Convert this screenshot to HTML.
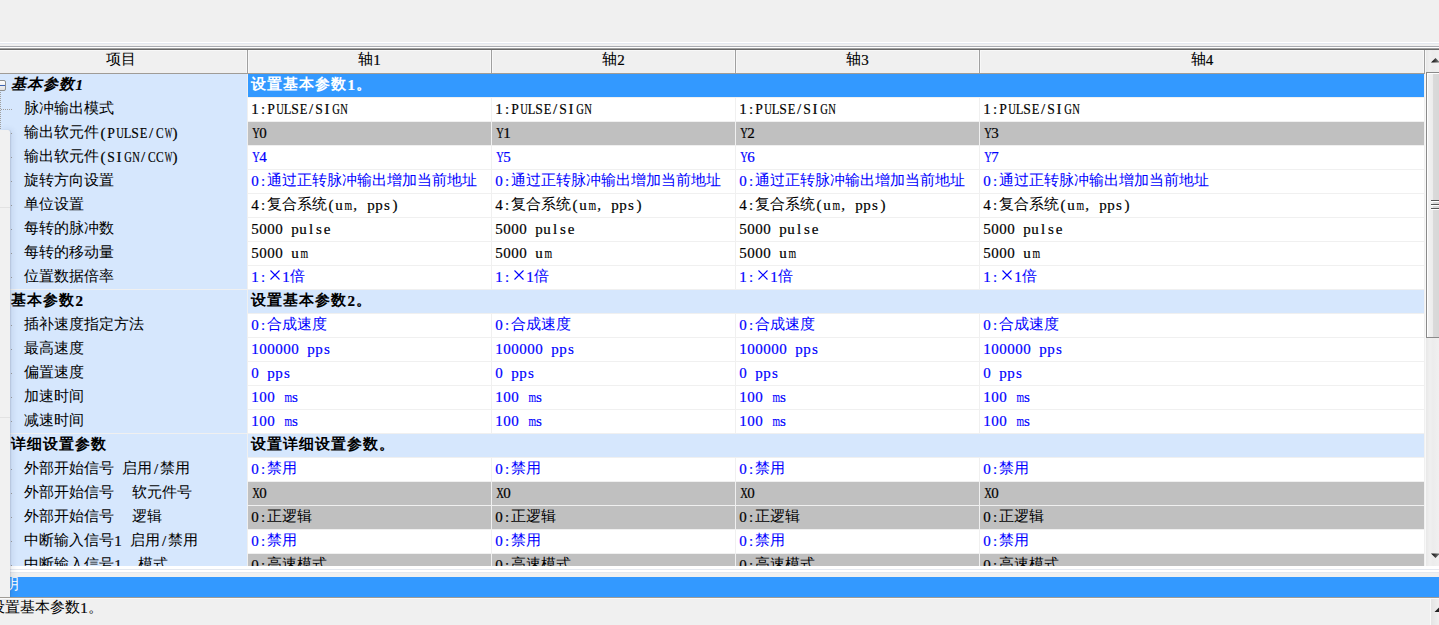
<!DOCTYPE html>
<html><head><meta charset="utf-8">
<style>
html,body{margin:0;padding:0;}
body{width:1439px;height:625px;overflow:hidden;background:#f0f0f0;position:relative;font-family:"Liberation Sans",sans-serif;font-size:15px;color:#000;}
div{position:absolute;box-sizing:border-box;}
.c{position:relative;top:-2px;}
svg.x{vertical-align:baseline;}
.a{font-family:"Liberation Serif",serif;font-size:15px;position:relative;top:-1px;-webkit-text-stroke:0.2px currentColor;}
b.s{font-weight:inherit;display:inline-block;width:8px;text-align:center;}
.gsel .c,.grow .c,.glab .c{letter-spacing:1px;}
.gsel b.s,.grow b.s,.glab b.s{width:8.6px;}
.ln{left:0;width:1439px;height:1px;}
#hdr{left:0;top:50px;width:1424px;height:24px;background:#f0f0f0;}
.hs{top:50px;width:1px;height:23px;background:#a0a0a0;}
.hw{top:51px;width:1px;height:22px;background:#f8f8f8;}
.hb{left:0;top:73px;width:1425px;height:1px;background:#a09c96;}
.ht{top:49px;height:23px;line-height:23px;text-align:center;white-space:nowrap;}
#tbl{left:0;top:74px;width:1424px;height:492px;overflow:hidden;background:#fff;}
#leftcol{left:0;top:0;width:247px;height:492px;background:#d6e7fd;}
#colb{left:247px;top:0;width:1px;height:492px;background:#f0f0f0;}
.csep{top:0;width:1px;height:492px;background:#f0f0f0;}
.rs{left:248px;width:1176px;height:1px;background:#f0f0f0;}
.hl{left:0;width:1424px;height:1px;background:#f0f0f0;}
.gsel{left:248px;width:1176px;height:23px;background:#3399ff;color:#fff;font-weight:bold;}
.grow{left:248px;width:1176px;height:23px;background:#d6e7fd;color:#000;font-weight:bold;}
.glab{left:11px;height:23px;font-weight:bold;white-space:nowrap;}
.glab.it{font-style:italic;}
.ilab{left:24px;height:23px;white-space:nowrap;}
.cell{height:23px;overflow:hidden;white-space:nowrap;}
.cell.w{background:#fff;}
.cell.g{background:#c0c0c0;}
.cell.k{color:#000;}
.cell.b{color:#0000ff;}
.t{left:3px;top:0;white-space:nowrap;}
.gsel .t,.grow .t{left:3px;}
.glab,.ilab,.t{line-height:23px;}
.dv{left:0;width:1px;background:repeating-linear-gradient(to bottom,#a0a0a0 0,#a0a0a0 1px,transparent 1px,transparent 2px);}
.dh{height:1px;background:repeating-linear-gradient(to right,#a0a0a0 0,#a0a0a0 1px,transparent 1px,transparent 2px);}
#ebox{left:-4px;top:80px;width:10px;height:11px;border:1px solid #8e8f8f;border-radius:2px;background:linear-gradient(#fff,#e0e0e0);}
#eminus{left:0;top:85px;width:5px;height:1px;background:#3c64b4;}
#vsb{left:1425px;top:50px;width:14px;height:516px;background:linear-gradient(to right,#f8f8f8 0,#f8f8f8 1px,#e8e8e8 1px,#f0f0f0 5px,#ececec 8px,#f0f0f0 14px);}
#thumb{left:1426px;top:72px;width:14px;height:266px;background:linear-gradient(to right,#f4f4f4 0,#ececec 6px,#dadada 6px,#d6d6d6 14px);border-left:1px solid #8a8a8a;border-top:1px solid #8a8a8a;border-bottom:1px solid #8a8a8a;box-shadow:inset 1px 1px 0 #fff;}
.grip{left:1431px;width:9px;height:2px;background:linear-gradient(#555 0,#555 1px,#fff 1px);}
#panel{left:0;top:130px;width:10px;height:468px;background:#f1f1f1;border-top-right-radius:2px;box-shadow:1px 0 1px rgba(0,0,0,0.08),2px 0 6px rgba(40,60,100,0.12);}
#band{left:10px;top:577px;width:1429px;height:20px;background:#3399ff;color:#fff;overflow:hidden;}
#status{left:-10px;top:595px;height:27px;line-height:27px;white-space:nowrap;}
</style></head><body>
<div class="ln" style="top:42px;background:#fff"></div>
<div class="ln" style="top:43px;background:#e4e8ef"></div>
<div class="ln" style="top:46px;background:#a8aab0"></div>
<div class="ln" style="top:47px;background:#fff"></div>
<div class="ln" style="top:48px;background:#a0a0a0"></div>
<div class="ln" style="top:49px;background:#696969"></div>
<div id="hdr"></div>
<div class="ln" style="top:50px;width:1424px;background:#f8f8f8"></div>
<div class="hw" style="left:246px"></div><div class="hs" style="left:247px"></div><div class="hw" style="left:248px"></div>
<div class="hw" style="left:490px"></div><div class="hs" style="left:491px"></div><div class="hw" style="left:492px"></div>
<div class="hw" style="left:734px"></div><div class="hs" style="left:735px"></div><div class="hw" style="left:736px"></div>
<div class="hw" style="left:978px"></div><div class="hs" style="left:979px"></div><div class="hw" style="left:980px"></div>
<div class="hw" style="left:1423px"></div><div class="hs" style="left:1424px"></div>
<div class="hb"></div>
<div class="ht" style="left:-6px;width:253px"><span class="c">项目</span></div>
<div class="ht" style="left:248px;width:243px"><span class="c">轴</span><span class="a"><b class="s">1</b></span></div>
<div class="ht" style="left:492px;width:243px"><span class="c">轴</span><span class="a"><b class="s">2</b></span></div>
<div class="ht" style="left:736px;width:243px"><span class="c">轴</span><span class="a"><b class="s">3</b></span></div>
<div class="ht" style="left:980px;width:444px"><span class="c">轴</span><span class="a"><b class="s">4</b></span></div>
<div id="tbl">
<div id="leftcol"></div>
<div id="colb"></div>
<div class="csep" style="left:491px"></div>
<div class="csep" style="left:735px"></div>
<div class="csep" style="left:979px"></div>
<div style="left:0;top:-74px;width:1424px;height:566px">
<div class="gsel" style="top:74px"><div class="t"><span class="c">设置基本参数</span><span class="a"><b class="s">1</b></span><span class="c">。</span></div></div>
<div class="glab it" style="top:74px"><span class="c">基本参数</span><span class="a"><b class="s">1</b></span></div>
<div class="rs" style="top:97px"></div>
<div class="ilab" style="top:98px"><span class="c">脉冲输出模式</span></div>
<div class="cell w k" style="top:98px;left:248px;width:243px"><div class="t"><span class="a"><b class="s">1</b><b class="s">:</b><b class="s" style="transform:scaleX(0.911)">P</b><b class="s" style="transform:scaleX(0.701)">U</b><b class="s" style="transform:scaleX(0.829)">L</b><b class="s" style="transform:scaleX(0.911)">S</b><b class="s" style="transform:scaleX(0.829)">E</b><b class="s">/</b><b class="s" style="transform:scaleX(0.911)">S</b><b class="s">I</b><b class="s" style="transform:scaleX(0.701)">G</b><b class="s" style="transform:scaleX(0.701)">N</b></span></div></div>
<div class="cell w k" style="top:98px;left:492px;width:243px"><div class="t"><span class="a"><b class="s">1</b><b class="s">:</b><b class="s" style="transform:scaleX(0.911)">P</b><b class="s" style="transform:scaleX(0.701)">U</b><b class="s" style="transform:scaleX(0.829)">L</b><b class="s" style="transform:scaleX(0.911)">S</b><b class="s" style="transform:scaleX(0.829)">E</b><b class="s">/</b><b class="s" style="transform:scaleX(0.911)">S</b><b class="s">I</b><b class="s" style="transform:scaleX(0.701)">G</b><b class="s" style="transform:scaleX(0.701)">N</b></span></div></div>
<div class="cell w k" style="top:98px;left:736px;width:243px"><div class="t"><span class="a"><b class="s">1</b><b class="s">:</b><b class="s" style="transform:scaleX(0.911)">P</b><b class="s" style="transform:scaleX(0.701)">U</b><b class="s" style="transform:scaleX(0.829)">L</b><b class="s" style="transform:scaleX(0.911)">S</b><b class="s" style="transform:scaleX(0.829)">E</b><b class="s">/</b><b class="s" style="transform:scaleX(0.911)">S</b><b class="s">I</b><b class="s" style="transform:scaleX(0.701)">G</b><b class="s" style="transform:scaleX(0.701)">N</b></span></div></div>
<div class="cell w k" style="top:98px;left:980px;width:444px"><div class="t"><span class="a"><b class="s">1</b><b class="s">:</b><b class="s" style="transform:scaleX(0.911)">P</b><b class="s" style="transform:scaleX(0.701)">U</b><b class="s" style="transform:scaleX(0.829)">L</b><b class="s" style="transform:scaleX(0.911)">S</b><b class="s" style="transform:scaleX(0.829)">E</b><b class="s">/</b><b class="s" style="transform:scaleX(0.911)">S</b><b class="s">I</b><b class="s" style="transform:scaleX(0.701)">G</b><b class="s" style="transform:scaleX(0.701)">N</b></span></div></div>
<div class="rs" style="top:121px"></div>
<div class="ilab" style="top:122px"><span class="c">输出软元件</span><span class="a"><b class="s">(</b><b class="s" style="transform:scaleX(0.911)">P</b><b class="s" style="transform:scaleX(0.701)">U</b><b class="s" style="transform:scaleX(0.829)">L</b><b class="s" style="transform:scaleX(0.911)">S</b><b class="s" style="transform:scaleX(0.829)">E</b><b class="s">/</b><b class="s" style="transform:scaleX(0.759)">C</b><b class="s" style="transform:scaleX(0.536)">W</b><b class="s">)</b></span></div>
<div class="cell g k" style="top:122px;left:248px;width:243px"><div class="t"><span class="a"><b class="s" style="transform:scaleX(0.701)">Y</b><b class="s">0</b></span></div></div>
<div class="cell g k" style="top:122px;left:492px;width:243px"><div class="t"><span class="a"><b class="s" style="transform:scaleX(0.701)">Y</b><b class="s">1</b></span></div></div>
<div class="cell g k" style="top:122px;left:736px;width:243px"><div class="t"><span class="a"><b class="s" style="transform:scaleX(0.701)">Y</b><b class="s">2</b></span></div></div>
<div class="cell g k" style="top:122px;left:980px;width:444px"><div class="t"><span class="a"><b class="s" style="transform:scaleX(0.701)">Y</b><b class="s">3</b></span></div></div>
<div class="rs" style="top:145px"></div>
<div class="ilab" style="top:146px"><span class="c">输出软元件</span><span class="a"><b class="s">(</b><b class="s" style="transform:scaleX(0.911)">S</b><b class="s">I</b><b class="s" style="transform:scaleX(0.701)">G</b><b class="s" style="transform:scaleX(0.701)">N</b><b class="s">/</b><b class="s" style="transform:scaleX(0.759)">C</b><b class="s" style="transform:scaleX(0.759)">C</b><b class="s" style="transform:scaleX(0.536)">W</b><b class="s">)</b></span></div>
<div class="cell w b" style="top:146px;left:248px;width:243px"><div class="t"><span class="a"><b class="s" style="transform:scaleX(0.701)">Y</b><b class="s">4</b></span></div></div>
<div class="cell w b" style="top:146px;left:492px;width:243px"><div class="t"><span class="a"><b class="s" style="transform:scaleX(0.701)">Y</b><b class="s">5</b></span></div></div>
<div class="cell w b" style="top:146px;left:736px;width:243px"><div class="t"><span class="a"><b class="s" style="transform:scaleX(0.701)">Y</b><b class="s">6</b></span></div></div>
<div class="cell w b" style="top:146px;left:980px;width:444px"><div class="t"><span class="a"><b class="s" style="transform:scaleX(0.701)">Y</b><b class="s">7</b></span></div></div>
<div class="rs" style="top:169px"></div>
<div class="ilab" style="top:170px"><span class="c">旋转方向设置</span></div>
<div class="cell w b" style="top:170px;left:248px;width:243px"><div class="t"><span class="a"><b class="s">0</b><b class="s">:</b></span><span class="c">通过正转脉冲输出增加当前地址</span></div></div>
<div class="cell w b" style="top:170px;left:492px;width:243px"><div class="t"><span class="a"><b class="s">0</b><b class="s">:</b></span><span class="c">通过正转脉冲输出增加当前地址</span></div></div>
<div class="cell w b" style="top:170px;left:736px;width:243px"><div class="t"><span class="a"><b class="s">0</b><b class="s">:</b></span><span class="c">通过正转脉冲输出增加当前地址</span></div></div>
<div class="cell w b" style="top:170px;left:980px;width:444px"><div class="t"><span class="a"><b class="s">0</b><b class="s">:</b></span><span class="c">通过正转脉冲输出增加当前地址</span></div></div>
<div class="rs" style="top:193px"></div>
<div class="ilab" style="top:194px"><span class="c">单位设置</span></div>
<div class="cell w k" style="top:194px;left:248px;width:243px"><div class="t"><span class="a"><b class="s">4</b><b class="s">:</b></span><span class="c">复合系统</span><span class="a"><b class="s">(</b><b class="s">u</b><b class="s" style="transform:scaleX(0.651)">m</b><b class="s">,</b><b class="s"></b><b class="s">p</b><b class="s">p</b><b class="s">s</b><b class="s">)</b></span></div></div>
<div class="cell w k" style="top:194px;left:492px;width:243px"><div class="t"><span class="a"><b class="s">4</b><b class="s">:</b></span><span class="c">复合系统</span><span class="a"><b class="s">(</b><b class="s">u</b><b class="s" style="transform:scaleX(0.651)">m</b><b class="s">,</b><b class="s"></b><b class="s">p</b><b class="s">p</b><b class="s">s</b><b class="s">)</b></span></div></div>
<div class="cell w k" style="top:194px;left:736px;width:243px"><div class="t"><span class="a"><b class="s">4</b><b class="s">:</b></span><span class="c">复合系统</span><span class="a"><b class="s">(</b><b class="s">u</b><b class="s" style="transform:scaleX(0.651)">m</b><b class="s">,</b><b class="s"></b><b class="s">p</b><b class="s">p</b><b class="s">s</b><b class="s">)</b></span></div></div>
<div class="cell w k" style="top:194px;left:980px;width:444px"><div class="t"><span class="a"><b class="s">4</b><b class="s">:</b></span><span class="c">复合系统</span><span class="a"><b class="s">(</b><b class="s">u</b><b class="s" style="transform:scaleX(0.651)">m</b><b class="s">,</b><b class="s"></b><b class="s">p</b><b class="s">p</b><b class="s">s</b><b class="s">)</b></span></div></div>
<div class="rs" style="top:217px"></div>
<div class="ilab" style="top:218px"><span class="c">每转的脉冲数</span></div>
<div class="cell w k" style="top:218px;left:248px;width:243px"><div class="t"><span class="a"><b class="s">5</b><b class="s">0</b><b class="s">0</b><b class="s">0</b><b class="s"></b><b class="s">p</b><b class="s">u</b><b class="s">l</b><b class="s">s</b><b class="s">e</b></span></div></div>
<div class="cell w k" style="top:218px;left:492px;width:243px"><div class="t"><span class="a"><b class="s">5</b><b class="s">0</b><b class="s">0</b><b class="s">0</b><b class="s"></b><b class="s">p</b><b class="s">u</b><b class="s">l</b><b class="s">s</b><b class="s">e</b></span></div></div>
<div class="cell w k" style="top:218px;left:736px;width:243px"><div class="t"><span class="a"><b class="s">5</b><b class="s">0</b><b class="s">0</b><b class="s">0</b><b class="s"></b><b class="s">p</b><b class="s">u</b><b class="s">l</b><b class="s">s</b><b class="s">e</b></span></div></div>
<div class="cell w k" style="top:218px;left:980px;width:444px"><div class="t"><span class="a"><b class="s">5</b><b class="s">0</b><b class="s">0</b><b class="s">0</b><b class="s"></b><b class="s">p</b><b class="s">u</b><b class="s">l</b><b class="s">s</b><b class="s">e</b></span></div></div>
<div class="rs" style="top:241px"></div>
<div class="ilab" style="top:242px"><span class="c">每转的移动量</span></div>
<div class="cell w k" style="top:242px;left:248px;width:243px"><div class="t"><span class="a"><b class="s">5</b><b class="s">0</b><b class="s">0</b><b class="s">0</b><b class="s"></b><b class="s">u</b><b class="s" style="transform:scaleX(0.651)">m</b></span></div></div>
<div class="cell w k" style="top:242px;left:492px;width:243px"><div class="t"><span class="a"><b class="s">5</b><b class="s">0</b><b class="s">0</b><b class="s">0</b><b class="s"></b><b class="s">u</b><b class="s" style="transform:scaleX(0.651)">m</b></span></div></div>
<div class="cell w k" style="top:242px;left:736px;width:243px"><div class="t"><span class="a"><b class="s">5</b><b class="s">0</b><b class="s">0</b><b class="s">0</b><b class="s"></b><b class="s">u</b><b class="s" style="transform:scaleX(0.651)">m</b></span></div></div>
<div class="cell w k" style="top:242px;left:980px;width:444px"><div class="t"><span class="a"><b class="s">5</b><b class="s">0</b><b class="s">0</b><b class="s">0</b><b class="s"></b><b class="s">u</b><b class="s" style="transform:scaleX(0.651)">m</b></span></div></div>
<div class="rs" style="top:265px"></div>
<div class="ilab" style="top:266px"><span class="c">位置数据倍率</span></div>
<div class="cell w b" style="top:266px;left:248px;width:243px"><div class="t"><span class="a"><b class="s">1</b><b class="s">:</b></span><svg class="x" width="15" height="13" viewBox="0 0 15 13"><path d="M3.5 0.5L12.5 9.5M12.5 0.5L3.5 9.5" stroke="currentColor" stroke-width="1.1" fill="none"/></svg><span class="a"><b class="s">1</b></span><span class="c">倍</span></div></div>
<div class="cell w b" style="top:266px;left:492px;width:243px"><div class="t"><span class="a"><b class="s">1</b><b class="s">:</b></span><svg class="x" width="15" height="13" viewBox="0 0 15 13"><path d="M3.5 0.5L12.5 9.5M12.5 0.5L3.5 9.5" stroke="currentColor" stroke-width="1.1" fill="none"/></svg><span class="a"><b class="s">1</b></span><span class="c">倍</span></div></div>
<div class="cell w b" style="top:266px;left:736px;width:243px"><div class="t"><span class="a"><b class="s">1</b><b class="s">:</b></span><svg class="x" width="15" height="13" viewBox="0 0 15 13"><path d="M3.5 0.5L12.5 9.5M12.5 0.5L3.5 9.5" stroke="currentColor" stroke-width="1.1" fill="none"/></svg><span class="a"><b class="s">1</b></span><span class="c">倍</span></div></div>
<div class="cell w b" style="top:266px;left:980px;width:444px"><div class="t"><span class="a"><b class="s">1</b><b class="s">:</b></span><svg class="x" width="15" height="13" viewBox="0 0 15 13"><path d="M3.5 0.5L12.5 9.5M12.5 0.5L3.5 9.5" stroke="currentColor" stroke-width="1.1" fill="none"/></svg><span class="a"><b class="s">1</b></span><span class="c">倍</span></div></div>
<div class="rs" style="top:289px"></div>
<div class="hl" style="top:289px"></div>
<div class="grow" style="top:290px"><div class="t"><span class="c">设置基本参数</span><span class="a"><b class="s">2</b></span><span class="c">。</span></div></div>
<div class="glab" style="top:290px"><span class="c">基本参数</span><span class="a"><b class="s">2</b></span></div>
<div class="rs" style="top:313px"></div>
<div class="ilab" style="top:314px"><span class="c">插补速度指定方法</span></div>
<div class="cell w b" style="top:314px;left:248px;width:243px"><div class="t"><span class="a"><b class="s">0</b><b class="s">:</b></span><span class="c">合成速度</span></div></div>
<div class="cell w b" style="top:314px;left:492px;width:243px"><div class="t"><span class="a"><b class="s">0</b><b class="s">:</b></span><span class="c">合成速度</span></div></div>
<div class="cell w b" style="top:314px;left:736px;width:243px"><div class="t"><span class="a"><b class="s">0</b><b class="s">:</b></span><span class="c">合成速度</span></div></div>
<div class="cell w b" style="top:314px;left:980px;width:444px"><div class="t"><span class="a"><b class="s">0</b><b class="s">:</b></span><span class="c">合成速度</span></div></div>
<div class="rs" style="top:337px"></div>
<div class="ilab" style="top:338px"><span class="c">最高速度</span></div>
<div class="cell w b" style="top:338px;left:248px;width:243px"><div class="t"><span class="a"><b class="s">1</b><b class="s">0</b><b class="s">0</b><b class="s">0</b><b class="s">0</b><b class="s">0</b><b class="s"></b><b class="s">p</b><b class="s">p</b><b class="s">s</b></span></div></div>
<div class="cell w b" style="top:338px;left:492px;width:243px"><div class="t"><span class="a"><b class="s">1</b><b class="s">0</b><b class="s">0</b><b class="s">0</b><b class="s">0</b><b class="s">0</b><b class="s"></b><b class="s">p</b><b class="s">p</b><b class="s">s</b></span></div></div>
<div class="cell w b" style="top:338px;left:736px;width:243px"><div class="t"><span class="a"><b class="s">1</b><b class="s">0</b><b class="s">0</b><b class="s">0</b><b class="s">0</b><b class="s">0</b><b class="s"></b><b class="s">p</b><b class="s">p</b><b class="s">s</b></span></div></div>
<div class="cell w b" style="top:338px;left:980px;width:444px"><div class="t"><span class="a"><b class="s">1</b><b class="s">0</b><b class="s">0</b><b class="s">0</b><b class="s">0</b><b class="s">0</b><b class="s"></b><b class="s">p</b><b class="s">p</b><b class="s">s</b></span></div></div>
<div class="rs" style="top:361px"></div>
<div class="ilab" style="top:362px"><span class="c">偏置速度</span></div>
<div class="cell w b" style="top:362px;left:248px;width:243px"><div class="t"><span class="a"><b class="s">0</b><b class="s"></b><b class="s">p</b><b class="s">p</b><b class="s">s</b></span></div></div>
<div class="cell w b" style="top:362px;left:492px;width:243px"><div class="t"><span class="a"><b class="s">0</b><b class="s"></b><b class="s">p</b><b class="s">p</b><b class="s">s</b></span></div></div>
<div class="cell w b" style="top:362px;left:736px;width:243px"><div class="t"><span class="a"><b class="s">0</b><b class="s"></b><b class="s">p</b><b class="s">p</b><b class="s">s</b></span></div></div>
<div class="cell w b" style="top:362px;left:980px;width:444px"><div class="t"><span class="a"><b class="s">0</b><b class="s"></b><b class="s">p</b><b class="s">p</b><b class="s">s</b></span></div></div>
<div class="rs" style="top:385px"></div>
<div class="ilab" style="top:386px"><span class="c">加速时间</span></div>
<div class="cell w b" style="top:386px;left:248px;width:243px"><div class="t"><span class="a"><b class="s">1</b><b class="s">0</b><b class="s">0</b><b class="s"></b><b class="s" style="transform:scaleX(0.651)">m</b><b class="s">s</b></span></div></div>
<div class="cell w b" style="top:386px;left:492px;width:243px"><div class="t"><span class="a"><b class="s">1</b><b class="s">0</b><b class="s">0</b><b class="s"></b><b class="s" style="transform:scaleX(0.651)">m</b><b class="s">s</b></span></div></div>
<div class="cell w b" style="top:386px;left:736px;width:243px"><div class="t"><span class="a"><b class="s">1</b><b class="s">0</b><b class="s">0</b><b class="s"></b><b class="s" style="transform:scaleX(0.651)">m</b><b class="s">s</b></span></div></div>
<div class="cell w b" style="top:386px;left:980px;width:444px"><div class="t"><span class="a"><b class="s">1</b><b class="s">0</b><b class="s">0</b><b class="s"></b><b class="s" style="transform:scaleX(0.651)">m</b><b class="s">s</b></span></div></div>
<div class="rs" style="top:409px"></div>
<div class="ilab" style="top:410px"><span class="c">减速时间</span></div>
<div class="cell w b" style="top:410px;left:248px;width:243px"><div class="t"><span class="a"><b class="s">1</b><b class="s">0</b><b class="s">0</b><b class="s"></b><b class="s" style="transform:scaleX(0.651)">m</b><b class="s">s</b></span></div></div>
<div class="cell w b" style="top:410px;left:492px;width:243px"><div class="t"><span class="a"><b class="s">1</b><b class="s">0</b><b class="s">0</b><b class="s"></b><b class="s" style="transform:scaleX(0.651)">m</b><b class="s">s</b></span></div></div>
<div class="cell w b" style="top:410px;left:736px;width:243px"><div class="t"><span class="a"><b class="s">1</b><b class="s">0</b><b class="s">0</b><b class="s"></b><b class="s" style="transform:scaleX(0.651)">m</b><b class="s">s</b></span></div></div>
<div class="cell w b" style="top:410px;left:980px;width:444px"><div class="t"><span class="a"><b class="s">1</b><b class="s">0</b><b class="s">0</b><b class="s"></b><b class="s" style="transform:scaleX(0.651)">m</b><b class="s">s</b></span></div></div>
<div class="rs" style="top:433px"></div>
<div class="hl" style="top:433px"></div>
<div class="grow" style="top:434px"><div class="t"><span class="c">设置详细设置参数。</span></div></div>
<div class="glab" style="top:434px"><span class="c">详细设置参数</span></div>
<div class="rs" style="top:457px"></div>
<div class="ilab" style="top:458px"><span class="c">外部开始信号</span><span class="a"><b class="s"></b></span><span class="c">启用</span><span class="a"><b class="s">/</b></span><span class="c">禁用</span></div>
<div class="cell w b" style="top:458px;left:248px;width:243px"><div class="t"><span class="a"><b class="s">0</b><b class="s">:</b></span><span class="c">禁用</span></div></div>
<div class="cell w b" style="top:458px;left:492px;width:243px"><div class="t"><span class="a"><b class="s">0</b><b class="s">:</b></span><span class="c">禁用</span></div></div>
<div class="cell w b" style="top:458px;left:736px;width:243px"><div class="t"><span class="a"><b class="s">0</b><b class="s">:</b></span><span class="c">禁用</span></div></div>
<div class="cell w b" style="top:458px;left:980px;width:444px"><div class="t"><span class="a"><b class="s">0</b><b class="s">:</b></span><span class="c">禁用</span></div></div>
<div class="rs" style="top:481px"></div>
<div class="ilab" style="top:482px"><span class="c">外部开始信号</span><span class="a"><b class="s"></b></span><span style="display:inline-block;width:10px"></span><span class="c">软元件号</span></div>
<div class="cell g k" style="top:482px;left:248px;width:243px"><div class="t"><span class="a"><b class="s" style="transform:scaleX(0.701)">X</b><b class="s">0</b></span></div></div>
<div class="cell g k" style="top:482px;left:492px;width:243px"><div class="t"><span class="a"><b class="s" style="transform:scaleX(0.701)">X</b><b class="s">0</b></span></div></div>
<div class="cell g k" style="top:482px;left:736px;width:243px"><div class="t"><span class="a"><b class="s" style="transform:scaleX(0.701)">X</b><b class="s">0</b></span></div></div>
<div class="cell g k" style="top:482px;left:980px;width:444px"><div class="t"><span class="a"><b class="s" style="transform:scaleX(0.701)">X</b><b class="s">0</b></span></div></div>
<div class="rs" style="top:505px"></div>
<div class="ilab" style="top:506px"><span class="c">外部开始信号</span><span class="a"><b class="s"></b></span><span style="display:inline-block;width:10px"></span><span class="c">逻辑</span></div>
<div class="cell g k" style="top:506px;left:248px;width:243px"><div class="t"><span class="a"><b class="s">0</b><b class="s">:</b></span><span class="c">正逻辑</span></div></div>
<div class="cell g k" style="top:506px;left:492px;width:243px"><div class="t"><span class="a"><b class="s">0</b><b class="s">:</b></span><span class="c">正逻辑</span></div></div>
<div class="cell g k" style="top:506px;left:736px;width:243px"><div class="t"><span class="a"><b class="s">0</b><b class="s">:</b></span><span class="c">正逻辑</span></div></div>
<div class="cell g k" style="top:506px;left:980px;width:444px"><div class="t"><span class="a"><b class="s">0</b><b class="s">:</b></span><span class="c">正逻辑</span></div></div>
<div class="rs" style="top:529px"></div>
<div class="ilab" style="top:530px"><span class="c">中断输入信号</span><span class="a"><b class="s">1</b><b class="s"></b></span><span class="c">启用</span><span class="a"><b class="s">/</b></span><span class="c">禁用</span></div>
<div class="cell w b" style="top:530px;left:248px;width:243px"><div class="t"><span class="a"><b class="s">0</b><b class="s">:</b></span><span class="c">禁用</span></div></div>
<div class="cell w b" style="top:530px;left:492px;width:243px"><div class="t"><span class="a"><b class="s">0</b><b class="s">:</b></span><span class="c">禁用</span></div></div>
<div class="cell w b" style="top:530px;left:736px;width:243px"><div class="t"><span class="a"><b class="s">0</b><b class="s">:</b></span><span class="c">禁用</span></div></div>
<div class="cell w b" style="top:530px;left:980px;width:444px"><div class="t"><span class="a"><b class="s">0</b><b class="s">:</b></span><span class="c">禁用</span></div></div>
<div class="rs" style="top:553px"></div>
<div class="ilab" style="top:554px"><span class="c">中断输入信号</span><span class="a"><b class="s">1</b><b class="s"></b><b class="s"></b></span><span class="c">模式</span></div>
<div class="cell g k" style="top:554px;left:248px;width:243px"><div class="t"><span class="a"><b class="s">0</b><b class="s">:</b></span><span class="c">高速模式</span></div></div>
<div class="cell g k" style="top:554px;left:492px;width:243px"><div class="t"><span class="a"><b class="s">0</b><b class="s">:</b></span><span class="c">高速模式</span></div></div>
<div class="cell g k" style="top:554px;left:736px;width:243px"><div class="t"><span class="a"><b class="s">0</b><b class="s">:</b></span><span class="c">高速模式</span></div></div>
<div class="cell g k" style="top:554px;left:980px;width:444px"><div class="t"><span class="a"><b class="s">0</b><b class="s">:</b></span><span class="c">高速模式</span></div></div>
<div class="rs" style="top:577px"></div>
<div class="dv" style="top:92px;height:474px"></div>
<div class="dh" style="left:1px;top:109px;width:12px"></div>
<div class="dh" style="left:1px;top:133px;width:12px"></div>
<div class="dh" style="left:1px;top:157px;width:12px"></div>
<div class="dh" style="left:1px;top:181px;width:12px"></div>
<div class="dh" style="left:1px;top:205px;width:12px"></div>
<div class="dh" style="left:1px;top:229px;width:12px"></div>
<div class="dh" style="left:1px;top:253px;width:12px"></div>
<div class="dh" style="left:1px;top:277px;width:12px"></div>
<div class="dh" style="left:1px;top:325px;width:12px"></div>
<div class="dh" style="left:1px;top:349px;width:12px"></div>
<div class="dh" style="left:1px;top:373px;width:12px"></div>
<div class="dh" style="left:1px;top:397px;width:12px"></div>
<div class="dh" style="left:1px;top:421px;width:12px"></div>
<div class="dh" style="left:1px;top:469px;width:12px"></div>
<div class="dh" style="left:1px;top:493px;width:12px"></div>
<div class="dh" style="left:1px;top:517px;width:12px"></div>
<div class="dh" style="left:1px;top:541px;width:12px"></div>
<div class="dh" style="left:1px;top:565px;width:12px"></div>
<div id="ebox"></div><div id="eminus"></div>
</div>
</div>
<div id="vsb"></div>
<svg style="position:absolute;left:1425px;top:50px" width="14" height="516">
<defs><linearGradient id="ag" x1="0" x2="1" y1="0" y2="0"><stop offset="0" stop-color="#000"/><stop offset="1" stop-color="#8a8a8a"/></linearGradient></defs>
<path d="M6 12.5 L10.5 8 L15 12.5 Z" fill="url(#ag)"/>
<path d="M6 503.5 L10.5 508 L15 503.5 Z" fill="url(#ag)"/>
</svg>
<div id="thumb"></div>
<div class="grip" style="top:200px"></div>
<div class="grip" style="top:204px"></div>
<div class="grip" style="top:208px"></div>
<div class="ln" style="top:566px;height:3px;background:#fff"></div>
<div class="ln" style="top:569px;background:#e4e8ef"></div>
<div class="ln" style="top:570px;height:2px;background:#fff"></div>
<div class="ln" style="top:572px;background:#e4e8ef"></div>
<div id="band"><div style="left:-6px;top:-1px;line-height:20px;"><span class="c">明</span></div></div>
<div id="panel"></div>
<div style="left:0;top:207px;width:10px;height:1px;background:#e2e2e2"></div>
<div style="left:0;top:417px;width:10px;height:1px;background:#e2e2e2"></div>
<div class="ln" style="top:597px;background:#a09c96"></div>
<div class="ln" style="top:598px;background:#fafafa"></div>
<div style="left:1430px;top:599px;width:1px;height:26px;background:#fafafa"></div>
<div style="left:1431px;top:599px;width:8px;height:26px;background:linear-gradient(to right,#e4e4e4,#f0f0f0)"></div>
<svg style="position:absolute;left:1425px;top:598px" width="14" height="27"><path d="M9.5 14 L14 9.5 L18.5 14 Z" fill="#222"/></svg>
<div id="status"><span class="c">设置基本参数</span><span class="a"><b class="s">1</b></span><span class="c">。</span></div>
</body></html>
